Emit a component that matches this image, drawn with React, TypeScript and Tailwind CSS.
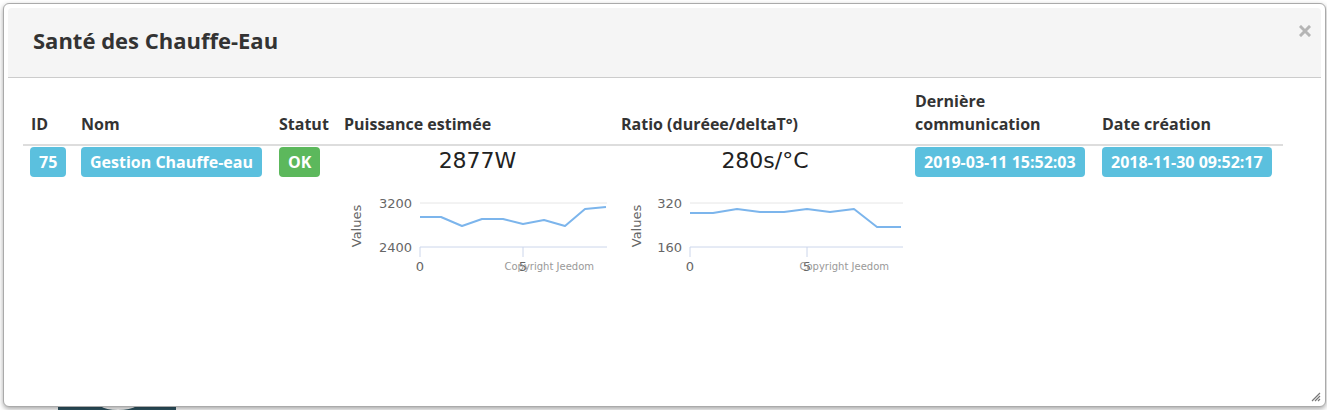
import React from "react";

type ChartProps = {
  offsetX: number;
  width: number;
  top: string;
  bottom: string;
  x0: number;
  x5: number;
  xEnd: number;
  labelRight: number;
  valuesX: number;
  copyRight: number;
  points: [number, number][];
};

const SVG_TOP = 188;

function MiniChart({ offsetX, width, top, bottom, x0, x5, xEnd, labelRight, valuesX, copyRight, points }: ChartProps) {
  const px = (x: number) => x - offsetX;
  const py = (y: number) => y - SVG_TOP;
  const line = points.map(([x, y]) => `${px(x)},${py(y)}`).join(" ");
  return (
    <svg width={width} height={90} className="block" style={{ fontFamily: "'DejaVu Sans', sans-serif" }}>
      <line x1={px(x0)} y1={py(204)} x2={px(xEnd)} y2={py(204)} stroke="#e6e6e6" strokeWidth="1" />
      <line x1={px(x0)} y1={py(248)} x2={px(xEnd)} y2={py(248)} stroke="#ccd6eb" strokeWidth="1" />
      <line x1={px(x0)} y1={py(248)} x2={px(x0)} y2={py(258)} stroke="#ccd6eb" strokeWidth="1" />
      <line x1={px(x5)} y1={py(248)} x2={px(x5)} y2={py(258)} stroke="#ccd6eb" strokeWidth="1" />
      <text x={px(labelRight)} y={py(209)} textAnchor="end" fontSize="13" fill="#666">{top}</text>
      <text x={px(labelRight)} y={py(253)} textAnchor="end" fontSize="13" fill="#666">{bottom}</text>
      <text
        x={0}
        y={0}
        fontSize="13"
        fill="#666"
        textAnchor="middle"
        transform={`translate(${px(valuesX) + 5}, ${py(227)}) rotate(-90)`}
      >
        Values
      </text>
      <text x={px(x0)} y={py(272)} textAnchor="middle" fontSize="13" fill="#666">0</text>
      <text x={px(x5)} y={py(272)} textAnchor="middle" fontSize="13" fill="#666">5</text>
      <text x={px(copyRight)} y={py(271)} textAnchor="end" fontSize="10" fill="#999">Copyright Jeedom</text>
      <polyline points={line} fill="none" stroke="#7cb5ec" strokeWidth="2" strokeLinejoin="round" />
    </svg>
  );
}

function Badge({ children, color = "bg-[#5bc0de]" }: { children: React.ReactNode; color?: string }) {
  return (
    <span className={`${color} inline-flex h-[30px] items-center rounded-[4px] px-[9px] text-[16px] font-bold text-white whitespace-nowrap`}>
      {children}
    </span>
  );
}

export default function App() {
  return (
    <div className="relative h-[410px] w-[1327px] overflow-hidden bg-white" style={{ fontFamily: "'Open Sans', sans-serif" }}>
      <svg className="absolute left-[58px] top-[404px]" width="118" height="8">
        <path d="M0 2 H42 Q48 6 60 6 Q72 6 79 2 H118 V8 H0 Z" fill="#2f5563" />
      </svg>

      <div className="relative ml-[3px] mt-[3px] h-[404px] w-[1323px] rounded-[6px] border border-[#aaa] bg-white p-[4px] shadow-[0_2px_5px_rgba(0,0,0,0.35)]">
        <div className="flex h-[70px] items-center justify-between rounded-t-[4px] border-b border-[#ccc] bg-[#f5f5f5] pl-[25px] pr-[10px]">
          <h1 className="mt-[-4px] text-[22px] font-bold text-[#333]">Santé des Chauffe-Eau</h1>
          <svg width="12" height="12" viewBox="0 0 12 12" className="mb-[24px]">
            <path d="M2 2 L10 10 M10 2 L2 10" stroke="#b5b5b5" strokeWidth="3" strokeLinecap="square" />
          </svg>
        </div>

        <div className="pl-[15px] pt-[12px]">
          <table className="w-[1259px] table-fixed border-collapse text-[16px] text-[#333]">
            <thead>
              <tr className="border-b-2 border-[#ddd]">
                <th className="w-[50px] px-[8px] pb-[8px] pt-[8px] text-left align-bottom font-bold leading-[23px]">ID</th>
                <th className="w-[198px] px-[8px] pb-[8px] text-left align-bottom font-bold leading-[23px]">Nom</th>
                <th className="w-[65px] px-[8px] pb-[8px] text-left align-bottom font-bold leading-[23px]">Statut</th>
                <th className="w-[277px] px-[8px] pb-[8px] text-left align-bottom font-bold leading-[23px]">Puissance estimée</th>
                <th className="w-[294px] px-[8px] pb-[8px] text-left align-bottom font-bold leading-[23px]">Ratio (duréee/deltaT°)</th>
                <th className="w-[187px] px-[8px] pb-[8px] text-left align-bottom font-bold leading-[23px]">
                  Dernière
                  <br />
                  communication
                </th>
                <th className="w-[189px] px-[8px] pb-[8px] text-left align-bottom font-bold leading-[23px]">Date création</th>
              </tr>
            </thead>
            <tbody>
              <tr>
                <td className="px-[7px] pt-[1px] align-top"><Badge>75</Badge></td>
                <td className="px-[8px] pt-[1px] align-top"><Badge>Gestion Chauffe-eau</Badge></td>
                <td className="px-[8px] pt-[1px] align-top"><Badge color="bg-[#5cb85c]">OK</Badge></td>
                <td className="px-[8px] pt-[1px] align-top">
                  <div className="pl-[6px] text-center text-[22px] leading-[28px] text-[#222]" style={{ fontFamily: "'DejaVu Sans', sans-serif" }}>
                    2877W
                  </div>
                  <div className="mt-[12px] ml-[1px]">
                    <MiniChart
                      offsetX={345}
                      width={265}
                      top="3200"
                      bottom="2400"
                      x0={420}
                      x5={523}
                      xEnd={607}
                      labelRight={412}
                      valuesX={356}
                      copyRight={594}
                      points={[[420, 218], [441, 218], [462, 227], [482, 220], [503, 220], [523, 225], [544, 221], [565, 227], [585, 210], [606, 208]]}
                    />
                  </div>
                </td>
                <td className="px-[8px] pt-[1px] align-top">
                  <div className="pl-[10px] text-center text-[22px] leading-[28px] text-[#222]" style={{ fontFamily: "'DejaVu Sans', sans-serif" }}>
                    280s/°C
                  </div>
                  <div className="mt-[12px] ml-[4px]">
                    <MiniChart
                      offsetX={625}
                      width={285}
                      top="320"
                      bottom="160"
                      x0={690}
                      x5={807}
                      xEnd={903}
                      labelRight={682}
                      valuesX={636}
                      copyRight={889}
                      points={[[690, 214], [713, 214], [737, 210], [760, 213], [784, 213], [807, 210], [830, 213], [854, 210], [877, 228], [901, 228]]}
                    />
                  </div>
                </td>
                <td className="px-[8px] pt-[1px] align-top"><Badge>2019-03-11 15:52:03</Badge></td>
                <td className="px-[8px] pt-[1px] align-top"><Badge>2018-11-30 09:52:17</Badge></td>
              </tr>
            </tbody>
          </table>
        </div>

        <svg className="absolute bottom-[4px] right-[4px]" width="12" height="12" viewBox="0 0 12 12">
          <path d="M11 3 L3 11 M11 6 L6 11 M11 9 L9 11" stroke="#777" strokeWidth="1.2" />
        </svg>
      </div>
    </div>
  );
}
